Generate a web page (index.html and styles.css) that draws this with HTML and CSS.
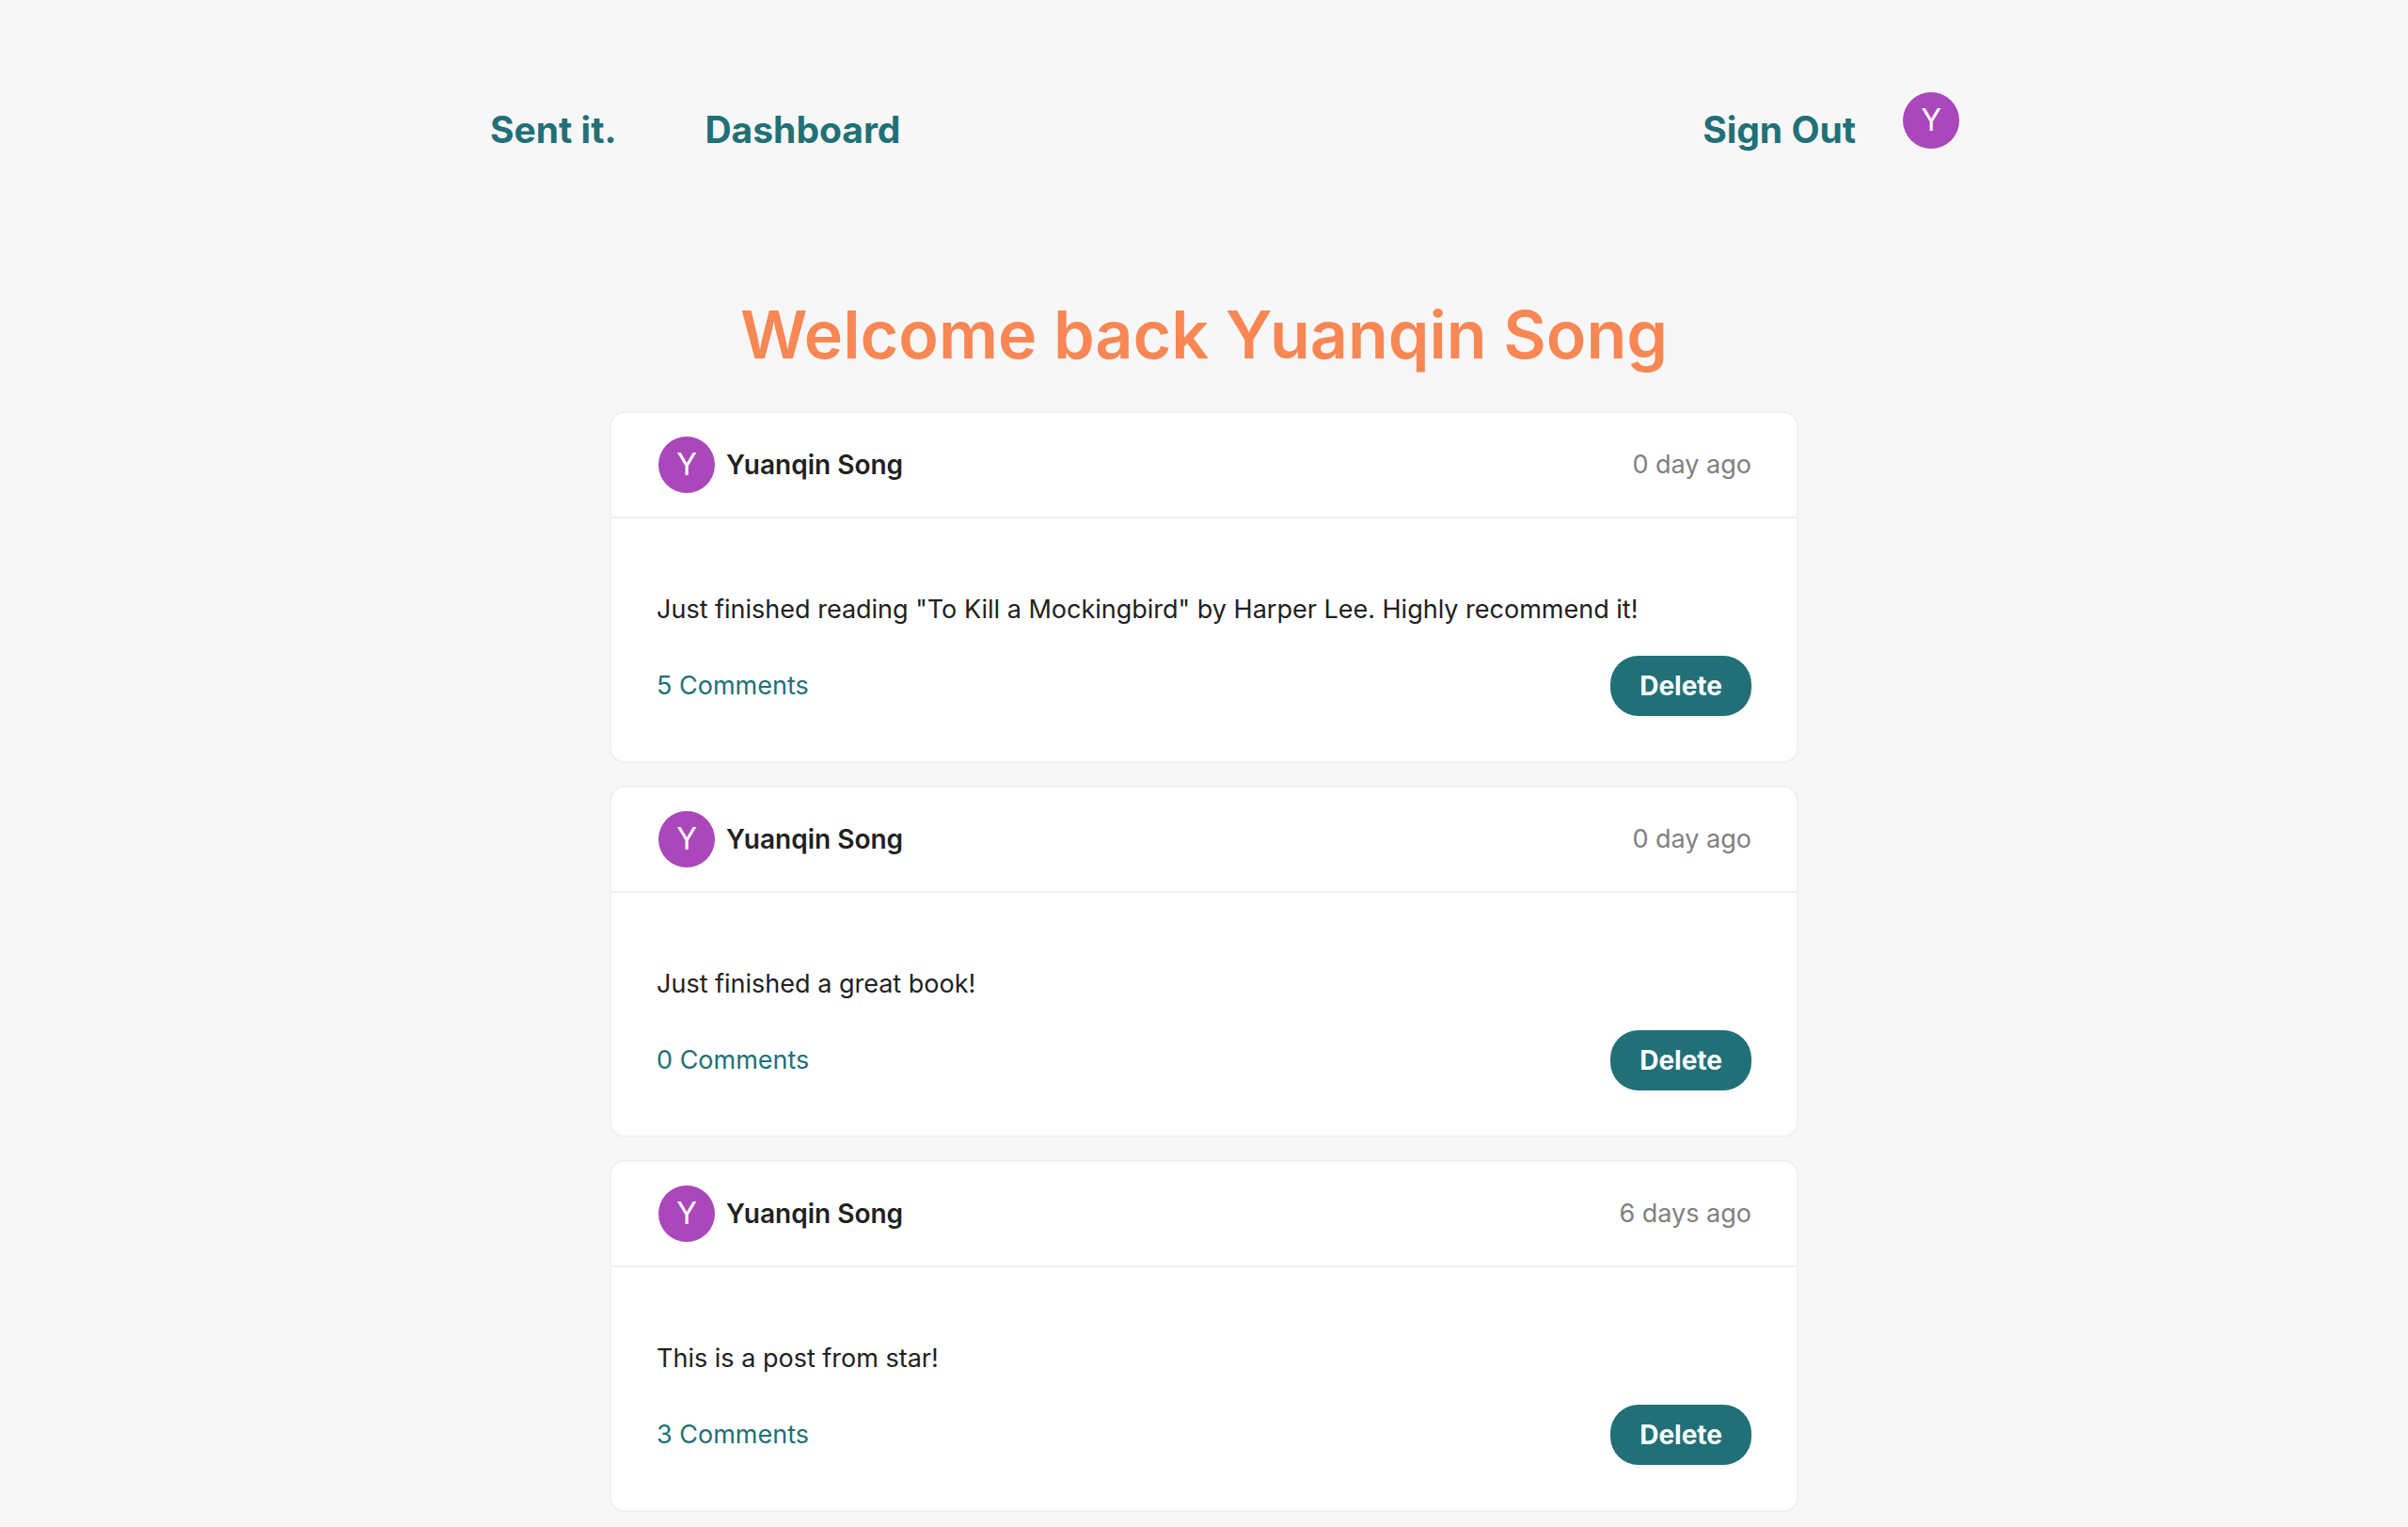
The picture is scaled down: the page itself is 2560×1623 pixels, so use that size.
FILE: index.html
```html
<!DOCTYPE html>
<html lang="en">
<head>
<meta charset="utf-8">
<meta name="viewport" content="width=device-width, initial-scale=1">
<title>Sent it. Dashboard</title>
<link rel="stylesheet" href="styles.css">
</head>
<body>
<header class="site-header">
  <nav class="nav">
    <a class="nav-link" href="#home">Sent it.</a>
    <a class="nav-link" href="#dashboard">Dashboard</a>
  </nav>
  <div class="account">
    <button class="nav-link sign-out" type="button">Sign Out</button>
    <span class="avatar">Y</span>
  </div>
</header>
<main class="feed">
  <h1 class="welcome">Welcome back Yuanqin Song</h1>
  <article class="post">
    <div class="post-header">
      <span class="avatar">Y</span>
      <h2 class="author">Yuanqin Song</h2>
      <span class="age">0 day ago</span>
    </div>
    <div class="post-body">
      <p class="message">Just finished reading "To Kill a Mockingbird" by Harper Lee. Highly recommend it!</p>
      <div class="actions">
        <a class="comments" href="#post-1">5 Comments</a>
        <button class="delete" type="button">Delete</button>
      </div>
    </div>
  </article>
  <article class="post">
    <div class="post-header">
      <span class="avatar">Y</span>
      <h2 class="author">Yuanqin Song</h2>
      <span class="age">0 day ago</span>
    </div>
    <div class="post-body">
      <p class="message">Just finished a great book!</p>
      <div class="actions">
        <a class="comments" href="#post-2">0 Comments</a>
        <button class="delete" type="button">Delete</button>
      </div>
    </div>
  </article>
  <article class="post">
    <div class="post-header">
      <span class="avatar">Y</span>
      <h2 class="author">Yuanqin Song</h2>
      <span class="age">6 days ago</span>
    </div>
    <div class="post-body">
      <p class="message">This is a post from star!</p>
      <div class="actions">
        <a class="comments" href="#post-3">3 Comments</a>
        <button class="delete" type="button">Delete</button>
      </div>
    </div>
  </article>
</main>
</body>
</html>
```
FILE: styles.css
```css
* {
  box-sizing: border-box;
}

body {
  margin: 0;
  background: #f7f7f7;
  color: #212121;
  font-family: Inter, "Liberation Sans", sans-serif;
  font-size: 27px;
  line-height: 40px;
}

h1,
h2,
p {
  margin: 0;
}

a {
  color: #217077;
  text-decoration: none;
}

button {
  border: 0;
  font-family: inherit;
  cursor: pointer;
}

.site-header {
  display: flex;
  justify-content: space-between;
  align-items: flex-start;
  max-width: 1606px;
  margin: 0 auto;
  padding: 98px 0 0 44px;
}

.nav {
  display: flex;
  gap: 94px;
  padding-top: 12px;
}

.nav-link {
  color: #217077;
  font-size: 39px;
  font-weight: 700;
  line-height: 56px;
}

.account {
  display: flex;
  gap: 50px;
}

.sign-out {
  margin-top: 12px;
  padding: 0;
  background: none;
}

.avatar {
  display: flex;
  flex: none;
  align-items: center;
  justify-content: center;
  width: 60px;
  height: 60px;
  border-radius: 50%;
  background: #a947bb;
  color: #fff;
  font-size: 32px;
}

.feed {
  display: flex;
  flex-direction: column;
  gap: 24px;
  max-width: 1312px;
  margin: 0 auto;
  padding: 142px 24px 16px;
}

.welcome {
  margin-bottom: 9px;
  color: #f88754;
  font-size: 70px;
  font-weight: 600;
  line-height: 96px;
  text-align: center;
}

.post {
  border: 2px solid #f0f0f0;
  border-radius: 16px;
  background: #fff;
}

.post-header {
  display: flex;
  align-items: center;
  gap: 12px;
  padding: 25px 48px 25px 50px;
  border-bottom: 2px solid #f0f0f0;
}

.author {
  font-size: 28px;
  font-weight: 600;
}

.age {
  margin-left: auto;
  color: #808080;
}

.post-body {
  padding: 77px 48px 48px;
}

.actions {
  display: flex;
  align-items: center;
  justify-content: space-between;
  margin-top: 29px;
}

.delete {
  height: 64px;
  padding: 0 31px;
  border-radius: 30px;
  background: #217077;
  box-shadow: 0 4px 0 rgba(0, 0, 0, 0.02);
  color: #fff;
  font-size: 28px;
  font-weight: 700;
}
```
